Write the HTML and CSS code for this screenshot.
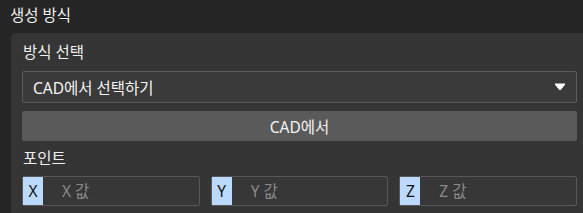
FILE: index.html
```html
<!DOCTYPE html>
<html lang="ko">
<head>
    <meta charset="UTF-8">
    <title>생성 방식</title>
    <link rel="stylesheet" href="styles.css">
</head>
<body>
    <div class="section-title">생성 방식</div>

    <div class="panel">
        <div class="field-label">방식 선택</div>
        <div class="select">
            <span>CAD에서 선택하기</span>
            <svg class="arrow" width="12" height="8" viewBox="0 0 12 8">
                <path d="M1 1 H11 L6.6 6.6 Q6 7.3 5.4 6.6 Z" fill="#fff" stroke="#fff" stroke-width="1" stroke-linejoin="round"/>
            </svg>
        </div>
        <button class="action-btn">CAD에서</button>

        <div class="field-label point-label">포인트</div>
        <div class="coords">
            <div class="coord">
                <span class="axis">X</span>
                <input type="text" placeholder="X 값">
            </div>
            <div class="coord">
                <span class="axis">Y</span>
                <input type="text" placeholder="Y 값">
            </div>
            <div class="coord">
                <span class="axis">Z</span>
                <input type="text" placeholder="Z 값">
            </div>
        </div>
    </div>
</body>
</html>
```

FILE: styles.css
```css
* { margin: 0; padding: 0; box-sizing: border-box; }

body {
    background: #252525;
    font-family: "Noto Sans", "Noto Sans CJK KR", sans-serif;
    font-size: 15.5px;
    color: #f0f0f0;
    overflow: hidden;
}

.section-title {
    height: 33px;
    line-height: 31px;
    padding-left: 10px;
}

.panel {
    margin-left: 11px;
    background: #353535;
    border-top-left-radius: 5px;
    padding: 8px 6px 10px 11px;
}

.field-label {
    height: 22px;
    line-height: 22px;
    padding-left: 1px;
    margin-bottom: 8px;
}

.point-label {
    margin-top: 6px;
    height: 23px;
    margin-bottom: 6px;
}

.select {
    height: 32px;
    display: flex;
    align-items: center;
    justify-content: space-between;
    background: #3a3a3a;
    border: 1px solid #5c5c5c;
    border-radius: 2px;
    padding: 0 10px 0 10px;
    color: #f4f4f4;
}

.arrow { display: block; }

.action-btn {
    display: block;
    width: 100%;
    height: 30px;
    margin-top: 8px;
    background: #5a5a5a;
    border: none;
    border-radius: 2px;
    color: #f4f4f4;
    font-family: inherit;
    font-size: inherit;
}

.coords {
    display: grid;
    grid-template-columns: repeat(3, minmax(0, 1fr));
    gap: 11px;
}

.coord {
    height: 30px;
    display: flex;
    border: 1px solid #575757;
    border-radius: 2px;
    background: #373737;
}

.axis {
    width: 20px;
    flex: none;
    background: #bcdaff;
    color: #111;
    text-align: center;
    line-height: 28px;
}

.coord input {
    flex: 1;
    width: 0;
    min-width: 0;
    background: transparent;
    border: none;
    outline: none;
    padding-left: 19px;
    font-family: inherit;
    font-size: inherit;
    color: #ddd;
}

.coord input::placeholder { color: #8a8a8a; }
```
